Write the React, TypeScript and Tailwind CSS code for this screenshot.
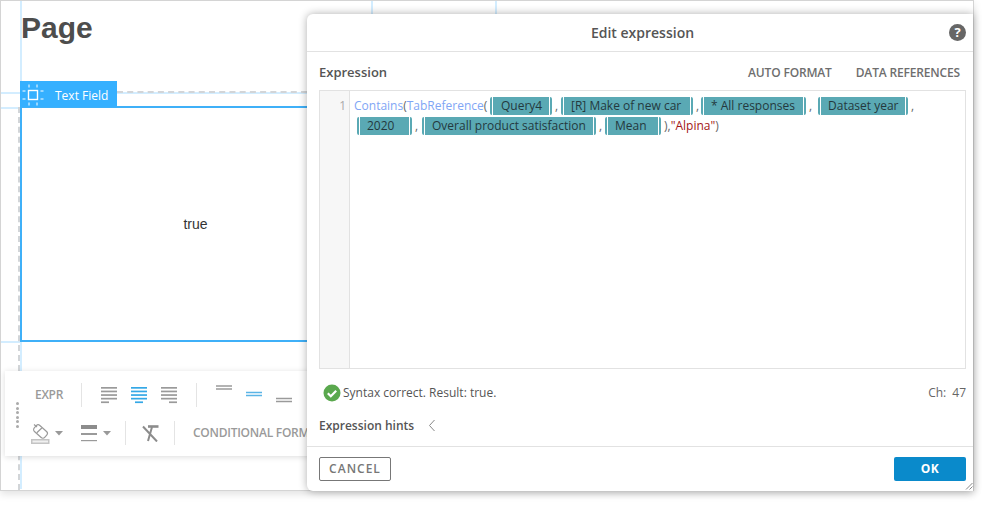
import React from "react";

const Chip = ({ w, children }: { w: number; children: React.ReactNode }) => (
  <span className="h-[18px] shrink-0 rounded-[2px] bg-[#5aa9b4] px-[2px] flex" style={{ width: w }}>
    <span className="flex-1 border-x border-white bg-[#5aa9b4] flex items-center pl-[7px] text-[#24393e] text-[12px] whitespace-nowrap overflow-hidden">
      {children}
    </span>
  </span>
);

const Comma = ({ w }: { w: number }) => (
  <span className="shrink-0 text-[#666] text-[12px]" style={{ width: w, paddingLeft: 3 }}>,</span>
);

const Lines = ({ rows, color }: { rows: [number, number][]; color: string }) => (
  <svg width="16" height="17" viewBox="0 0 16 17" fill={color} className="shrink-0">
    {rows.map(([x, w], i) => (
      <rect key={i} x={x} y={i * 3.6} width={w} height="1.7" />
    ))}
  </svg>
);

const Caret = () => (
  <svg width="8" height="5" viewBox="0 0 8 5" className="shrink-0 block"><path d="M0 0h8L4 4.5z" fill="#999" /></svg>
);

const Sep = ({ h = 24 }: { h?: number }) => <div className="w-px bg-[#e4e4e4] shrink-0" style={{ height: h }} />;

const Guide = ({ cls }: { cls: string }) => <div className={"absolute bg-[#d3edff] " + cls} />;

export default function App() {
  return (
    <div className="relative w-[989px] h-[506px] bg-white overflow-hidden font-['Open_Sans',sans-serif]">
      {/* page canvas */}
      <div className="absolute left-0 top-0 w-[974px] h-[491px] border border-[#d4d4d4] shadow-[0_3px_8px_rgba(0,0,0,0.12)] bg-white">
        <Guide cls="left-[19px] top-0 w-[2px] h-[488px]" />
        <Guide cls="left-[370px] top-0 w-[2px] h-[14px]" />
        <Guide cls="left-[494px] top-0 w-[2px] h-[14px]" />
        <Guide cls="left-0 top-[91px] w-[306px] h-[2px]" />
        <Guide cls="left-0 top-[106px] w-[20px] h-[2px]" />
        <Guide cls="left-0 top-[340px] w-[20px] h-[2px]" />

        <h1 className="absolute left-[20px] top-[9px] font-['Liberation_Sans',sans-serif] font-bold text-[30px] leading-[36px] text-[#4d4d4d]">Page</h1>

        <div className="absolute left-[116px] top-[90px] w-[190px] border-t-2 border-dashed border-[#d2d5d8]" />
        <div className="absolute left-[17px] top-[106px] h-[383px] border-l-2 border-dashed border-[#d2d5d8]" />

        <div className="absolute left-[19px] top-[105px] w-[351px] h-[236px] border-2 border-[#3fb0f8] bg-white flex items-center justify-center text-[14px] text-[#333] font-['Liberation_Sans',sans-serif]">
          <span>true</span>
        </div>

        <div className="absolute left-[19px] top-[80px] w-[97px] h-[26px] bg-[#35b0ff] flex items-center pt-[2px] text-white text-[12px]">
          <svg width="24" height="24" viewBox="0 0 24 24" className="ml-[1px] shrink-0" stroke="#fff" fill="none">
            <rect x="7.5" y="7.5" width="9" height="9" strokeWidth="1.4" />
            <path d="M8 1.5v3M16 1.5v3M8 19.5v3M16 19.5v3M1.5 8h3M1.5 16h3M19.5 8h3M19.5 16h3" />
          </svg>
          <span className="ml-[10px] mt-[1px]">Text Field</span>
        </div>

        {/* toolbar */}
        <div className="absolute left-[4px] top-[370px] w-[340px] h-[85px] bg-white shadow-[0_1px_6px_rgba(0,0,0,0.14)] flex">
          <div className="w-[12px] ml-[6px] mr-[4px] mt-[31px] flex flex-col gap-[1.6px] items-center shrink-0">
            {[0, 1, 2, 3, 4, 5].map((i) => (
              <span key={i} className="w-[3px] h-[3px] rounded-full bg-[#aaa]" />
            ))}
          </div>
          <div className="flex flex-col min-w-0">
            <div className="h-[24px] mt-[12px] flex items-center">
              <span className="ml-[8px] w-[46px] text-[12px] font-semibold text-[#9a9a9a] tracking-[-0.3px]">EXPR</span>
              <Sep />
              <div className="ml-[19px] flex gap-[14px]">
                <Lines color="#9a9a9a" rows={[[0,16],[0,16],[0,16],[0,16],[0,8]]} />
                <Lines color="#35a8e6" rows={[[0,16],[0,16],[0,16],[0,16],[4,8]]} />
                <Lines color="#9a9a9a" rows={[[0,16],[0,16],[0,16],[0,16],[8,8]]} />
              </div>
              <div className="ml-[19px]"><Sep /></div>
              <div className="ml-[19px] flex gap-[14px] items-start h-[24px]">
                <svg width="16" height="24" className="shrink-0"><path d="M0 3h16M0 6h16" stroke="#9a9a9a" strokeWidth="1.6" /></svg>
                <svg width="16" height="24" className="shrink-0"><path d="M0 9.5h16M0 12.5h16" stroke="#5ab4e6" strokeWidth="1.6" /></svg>
                <svg width="16" height="24" className="shrink-0"><path d="M0 15.5h16M0 18.5h16" stroke="#9a9a9a" strokeWidth="1.6" /></svg>
              </div>
            </div>
            <div className="h-[24px] mt-[14px] flex items-center">
              <svg width="20" height="21" viewBox="0 0 20 21" className="ml-[4px] shrink-0" fill="none">
                <rect x="5.5" y="1.5" width="8" height="14" rx="2.5" transform="rotate(-48 9.5 8.5)" stroke="#9a9a9a" strokeWidth="1.2" />
                <path d="M5.8 9.8l5-4.8M3 1.5l3 2.5" stroke="#9a9a9a" strokeWidth="1.2" />
                <rect x="0.75" y="16.75" width="17" height="3.5" fill="#f0f0f0" stroke="#c4c4c4" strokeWidth="1.5" />
              </svg>
              <span className="ml-[4px]"><Caret /></span>
              <div className="ml-[18px]">
                <svg width="16" height="17" className="shrink-0 block"><rect width="16" height="4" fill="#8c8c8c" /><rect y="8" width="16" height="2" fill="#9a9a9a" /><rect y="15" width="16" height="1.2" fill="#9a9a9a" /></svg>
              </div>
              <span className="ml-[6px]"><Caret /></span>
              <div className="ml-[14px]"><Sep /></div>
              <svg width="17" height="17" viewBox="0 0 17 17" className="ml-[16px] shrink-0" fill="none">
                <path d="M6 1.5h10.5" stroke="#8c8c8c" strokeWidth="2.6" />
                <path d="M10 2L6 16M1 1.5l14 15" stroke="#8c8c8c" strokeWidth="2" />
              </svg>
              <div className="ml-[15px]"><Sep /></div>
              <span className="ml-[18px] text-[12px] font-semibold text-[#9a9a9a] tracking-[-0.25px] whitespace-nowrap">CONDITIONAL FORMAT</span>
            </div>
          </div>
        </div>

        {/* modal */}
        <div className="absolute left-[306px] top-[13px] w-[666px] h-[477px] bg-white rounded-tl-[6px] rounded-bl-[6px] shadow-[0_0_8px_rgba(0,0,0,0.32)] flex flex-col text-[#555]">
          <div className="h-[38px] border-b border-[#e2e2e2] flex items-center justify-center relative shrink-0 pl-[5px]">
            <span className="text-[14px] font-semibold text-[#555]">Edit expression</span>
            <span className="absolute right-[7px] top-[10px] w-[17px] h-[17px] rounded-full bg-[#666] text-white text-[13px] font-bold leading-[17px] text-center">?</span>
          </div>

          <div className="h-[38px] flex items-center justify-between pl-[12px] pr-[13px] pt-[4px] shrink-0">
            <span className="text-[13px] font-semibold text-[#555]">Expression</span>
            <div className="flex gap-[24px] text-[12px] font-semibold text-[#6e6e6e] tracking-[-0.16px]">
              <span>AUTO FORMAT</span>
              <span>DATA REFERENCES</span>
            </div>
          </div>

          <div className="ml-[12px] mr-[7px] h-[279px] border border-[#e2e2e2] flex shrink-0 text-[12px]">
            <div className="w-[30px] bg-[#f7f7f7] border-r border-[#e2e2e2] text-right pr-[3px] pt-[6px] text-[#aaa] text-[12px] leading-[18px] shrink-0">1</div>
            <div className="flex-1 pt-[6px] flex flex-col gap-[2px] min-w-0">
              <div className="flex items-center h-[18px] pl-[4px] whitespace-nowrap">
                <span className="text-[#7fa6f5] w-[136px] shrink-0 overflow-hidden">Contains<span className="text-[#666]">(</span>TabReference<span className="text-[#666]">(</span></span>
                <Chip w={62}><span className="pl-[1px]">Query4</span></Chip>
                <Comma w={9} />
                <Chip w={132}>[R] Make of new car</Chip>
                <Comma w={8} />
                <Chip w={105}>* All responses</Chip>
                <Comma w={12} />
                <Chip w={90}>Dataset year</Chip>
                <Comma w={8} />
              </div>
              <div className="flex items-center h-[18px] pl-[7px] whitespace-nowrap">
                <Chip w={55}>2020</Chip>
                <Comma w={10} />
                <Chip w={174}>Overall product satisfaction</Chip>
                <Comma w={9} />
                <Chip w={56}>Mean</Chip>
                <span className="ml-[3px] text-[#666]">),</span>
                <span className="text-[#a31515]">"Alpina"</span>
                <span className="text-[#666]">)</span>
              </div>
            </div>
          </div>

          <div className="h-[47px] flex items-center justify-between pl-[16px] pr-[7px] shrink-0 pt-[1px]">
            <div className="flex items-center gap-[2px]">
              <svg width="18" height="18" viewBox="0 0 18 18" className="shrink-0">
                <circle cx="9" cy="9" r="8.5" fill="#5aa84e" />
                <path d="M4.8 9.3l3 3 5.4-5.6" stroke="#fff" strokeWidth="2.2" fill="none" />
              </svg>
              <span className="text-[12px] text-[#555]">Syntax correct. Result: true.</span>
            </div>
            <div className="flex gap-[6px] text-[12px] text-[#666]">
              <span>Ch:</span>
              <span>47</span>
            </div>
          </div>

          <div className="h-[19px] flex items-center pl-[12px] gap-[14px] shrink-0">
            <span className="text-[12px] font-semibold text-[#555]">Expression hints</span>
            <svg width="8" height="13" viewBox="0 0 8 13" fill="none" className="shrink-0"><path d="M6.5 1L1.5 6.5l5 5.5" stroke="#888" /></svg>
          </div>

          <div className="mt-[11px] border-t border-[#e2e2e2] flex-1 flex items-center justify-between pl-[12px] pr-[7px] relative">
            <button className="w-[72px] h-[24px] border border-[#777] rounded-[2px] text-[12px] font-semibold text-[#777] tracking-[1px]">CANCEL</button>
            <button className="w-[72px] h-[24px] bg-[#0a8acb] rounded-[2px] text-[12px] font-bold text-white tracking-[0.6px]">OK</button>
            <svg width="8" height="8" viewBox="0 0 8 8" className="absolute right-[0px] bottom-[1px]" stroke="#888" fill="none"><path d="M1 7.5L7.5 1M4.5 7.5l3-3" /></svg>
          </div>
        </div>
      </div>
    </div>
  );
}
